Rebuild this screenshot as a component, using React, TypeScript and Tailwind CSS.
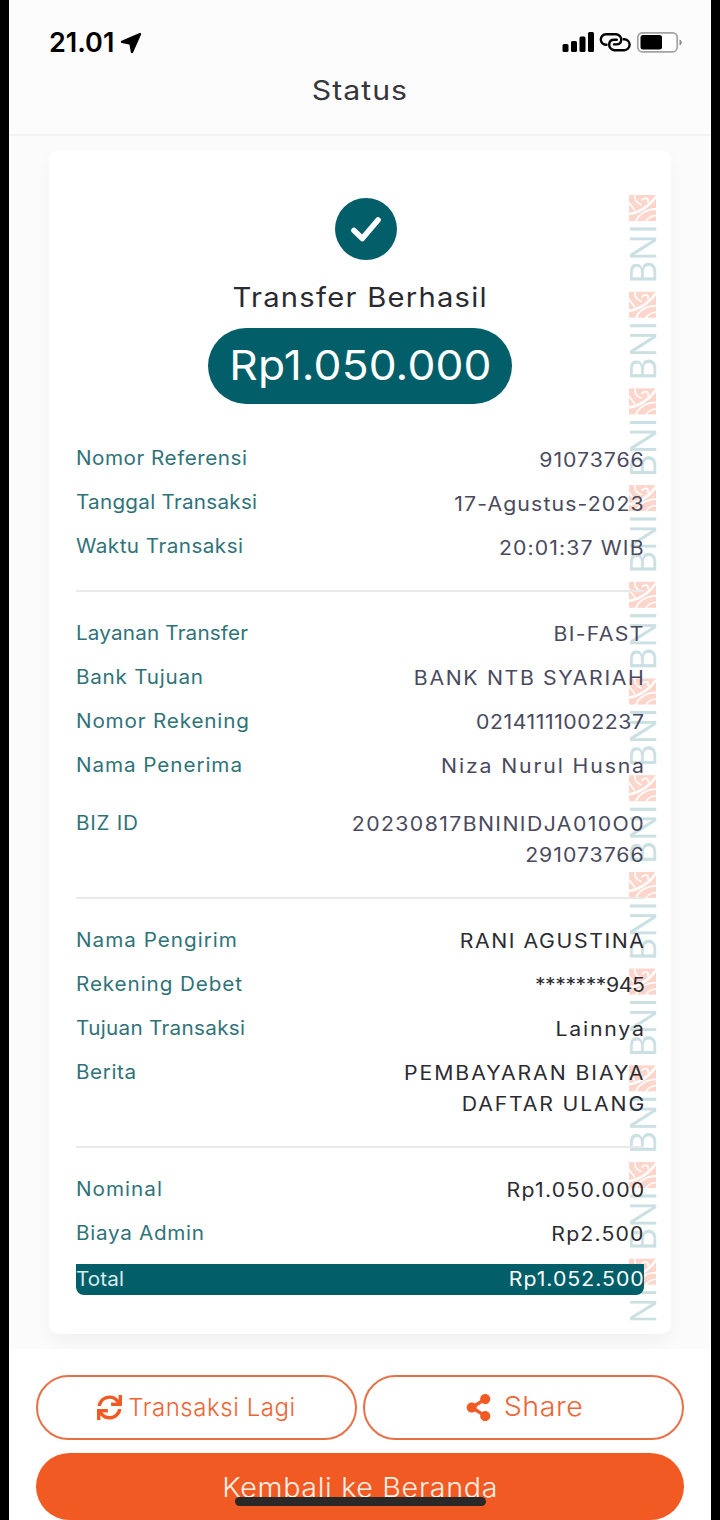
import { FaShareAlt, FaSync } from "react-icons/fa";

type Tone = "slate" | "ink";
type Line = { text: string; tracking: string };
type Detail = { label: Line; value: Line[]; tone: Tone; className?: string };

const sections: Detail[][] = [
  [
    { label: { text: "Nomor Referensi", tracking: "tracking-[0.48px]" }, value: [{ text: "91073766", tracking: "tracking-[0.88px] -mr-[0.88px]" }], tone: "slate" },
    { label: { text: "Tanggal Transaksi", tracking: "tracking-[0.24px]" }, value: [{ text: "17-Agustus-2023", tracking: "tracking-[1.04px] -mr-[1.04px]" }], tone: "slate" },
    { label: { text: "Waktu Transaksi", tracking: "tracking-[0.43px]" }, value: [{ text: "20:01:37 WIB", tracking: "tracking-[1.02px] -mr-[1.02px]" }], tone: "slate" },
  ],
  [
    { label: { text: "Layanan Transfer", tracking: "tracking-[0.16px]" }, value: [{ text: "BI-FAST", tracking: "tracking-[1.22px] -mr-[1.22px]" }], tone: "slate" },
    { label: { text: "Bank Tujuan", tracking: "tracking-[0.7px]" }, value: [{ text: "BANK NTB SYARIAH", tracking: "tracking-[1.5px] -mr-[1.5px]" }], tone: "slate" },
    { label: { text: "Nomor Rekening", tracking: "tracking-[0.78px]" }, value: [{ text: "02141111002237", tracking: "tracking-[0.5px] -mr-[0.5px]" }], tone: "slate" },
    { label: { text: "Nama Penerima", tracking: "tracking-[0.87px]" }, value: [{ text: "Niza Nurul Husna", tracking: "tracking-[1.7px] -mr-[1.7px]" }], tone: "slate" },
    {
      label: { text: "BIZ ID", tracking: "tracking-[0.69px]" },
      value: [
        { text: "20230817BNINIDJA010O0", tracking: "tracking-[1.28px] -mr-[1.28px]" },
        { text: "291073766", tracking: "tracking-[0.91px] -mr-[0.91px]" },
      ],
      tone: "slate",
      className: "mt-3.5",
    },
  ],
  [
    { label: { text: "Nama Pengirim", tracking: "tracking-[0.94px]" }, value: [{ text: "RANI AGUSTINA", tracking: "tracking-[1.45px] -mr-[1.45px]" }], tone: "ink" },
    { label: { text: "Rekening Debet", tracking: "tracking-[0.84px]" }, value: [{ text: "*******945", tracking: "tracking-[-0.46px]" }], tone: "ink" },
    { label: { text: "Tujuan Transaksi", tracking: "tracking-[0.29px]" }, value: [{ text: "Lainnya", tracking: "tracking-[1.63px] -mr-[1.63px]" }], tone: "ink" },
    {
      label: { text: "Berita", tracking: "tracking-[0.54px]" },
      value: [
        { text: "PEMBAYARAN BIAYA", tracking: "tracking-[1.75px] -mr-[1.75px]" },
        { text: "DAFTAR ULANG", tracking: "tracking-[1.67px] -mr-[1.67px]" },
      ],
      tone: "ink",
    },
  ],
  [
    { label: { text: "Nominal", tracking: "tracking-[0.95px]" }, value: [{ text: "Rp1.050.000", tracking: "tracking-[1.15px] -mr-[1.15px]" }], tone: "ink" },
    { label: { text: "Biaya Admin", tracking: "tracking-[0.66px]" }, value: [{ text: "Rp2.500", tracking: "tracking-[1.07px] -mr-[1.07px]" }], tone: "ink" },
  ],
];

const marks = [0, 1, 2, 3, 4, 5, 6, 7, 8, 9, 10, 11];

function StatusIcons() {
  return (
    <svg width="122" height="24" viewBox="0 0 122 24" fill="none">
      <rect x="2.5" y="14" width="6" height="8" rx="1.5" fill="#000" />
      <rect x="11" y="11" width="6" height="11" rx="1.5" fill="#000" />
      <rect x="19.5" y="6.5" width="6" height="15.5" rx="1.5" fill="#000" />
      <rect x="28" y="2" width="6" height="20" rx="1.5" fill="#000" />
      <g stroke="#000" strokeWidth="2.4" strokeLinecap="round">
        <path d="M46.5 14.8h-.3a5.2 5.2 0 0 1-.2-10.6h10.2a5.4 5.4 0 0 1 5 6.2c-.3 2.6-2.3 4-4.8 4H54" />
        <path d="M63.7 9.2h.3a5.5 5.5 0 0 1 .2 11H54.5a5.6 5.6 0 0 1-5.3-6.2c.3-2.7 2.3-4.3 4.9-4.3h2.7" />
      </g>
      <rect x="77.8" y="2.8" width="39.4" height="19" rx="4.5" fill="#fff" stroke="#a3a3a3" strokeWidth="1.7" />
      <rect x="80.5" y="5" width="21.5" height="14.5" rx="2.5" fill="#000" />
      <path d="M119.5 9.5c3 .8 3 5 0 5.8z" fill="#8b8b8b" />
    </svg>
  );
}

function Watermark() {
  return (
    <svg className="absolute right-[15px] top-[45px] overflow-visible" width="27" height="1127" viewBox="0 0 27 1127">
      {marks.map((i) => (
        <g key={i} transform={`translate(0 ${i * 96.7})`}>
          <rect x="0" y="0" width="27" height="26" fill="#fdd5ca" />
          <g fill="none" stroke="#fff" strokeLinecap="round">
            <path d="M-.5 19C10 18 20 11 27.5 1" strokeWidth="2.6" />
            <path d="M7 26.5C9 19 18 14 27.5 14" strokeWidth="1.8" />
            <path d="M-.5 7l6 8M6 -.5c-1 5 1 8 6 10M13 5c3-3 7-2 6 2" strokeWidth="1.6" />
            <path d="M17 26.5c1-3 5-6 10.5-6" strokeWidth="1.5" />
          </g>
          <text
            transform={i === 11 ? "translate(26.5 65) rotate(-90)" : "translate(26.5 89) rotate(-90)"}
            textLength={i === 11 ? 36 : 60}
            lengthAdjust="spacingAndGlyphs"
            className="fill-[#cbe0e2] font-['Open_Sans',sans-serif] text-[36px] font-medium"
          >
            {i === 11 ? "NI" : "BNI"}
          </text>
        </g>
      ))}
    </svg>
  );
}

function DetailRow({ label, value, tone, className = "" }: Detail) {
  return (
    <div className={`flex items-start justify-between ${className}`}>
      <span className={`-mt-[1.5px] origin-left scale-x-[1.06] leading-[30px] text-[#2f7379] ${label.tracking}`}>{label.text}</span>
      <div className="flex flex-col items-end">
        {value.map((line) => (
          <span
            key={line.text}
            className={`origin-right scale-x-[1.09] font-[425] leading-[30.5px] ${tone === "slate" ? "text-[#4a4a5e]" : "text-[#2b2b31]"} ${line.tracking}`}
          >
            {line.text}
          </span>
        ))}
      </div>
    </div>
  );
}

export default function App() {
  return (
    <div className="h-[1520px] w-[720px] overflow-hidden bg-black px-[9px] font-['Inter',sans-serif]">
      <div className="relative flex h-full flex-col bg-white">
        <header className="flex h-[136px] flex-col border-b-2 border-[#f3f3f3] bg-[#fcfcfc]">
          <div className="flex h-[60px] items-start justify-between pl-10 pr-[29px] pt-[30px]">
            <div className="flex items-center gap-1.5 pt-px">
              <span className="text-[27px] font-semibold leading-6 text-black">21.01</span>
              <svg width="22" height="22" viewBox="0 0 22 22">
                <path d="M20 2 2 9.8 10.5 11.5 12 20z" fill="#000" stroke="#000" strokeWidth="2.4" strokeLinejoin="round" />
              </svg>
            </div>
            <StatusIcons />
          </div>
          <h1 className="flex justify-center pt-[15px] text-[27px] leading-8 text-[#35353b]">
            <span className="scale-x-[1.12] tracking-[0.9px]">Status</span>
          </h1>
        </header>

        <main className="h-[1214px] bg-[#fbfbfb] px-10 pt-3.5">
          <section className="relative flex h-[1184px] flex-col rounded-[10px] bg-white px-[27px] text-[19.5px] shadow-[0_8px_16px_rgba(0,0,0,0.04)]">
            <Watermark />
            <div className="relative flex flex-col items-center pt-12">
              <div className="ml-3 flex size-[62px] items-center justify-center rounded-full bg-[#025f69]">
                <svg width="34" height="30" viewBox="0 0 34 30" fill="none">
                  <path d="M5 16.5 13.3 24.5 29 6" stroke="#fff" strokeWidth="5.6" strokeLinecap="round" strokeLinejoin="round" />
                </svg>
              </div>
              <h2 className="mt-5 scale-x-[1.08] text-[27px] leading-9 tracking-[1.17px] text-[#2a2a30]">Transfer Berhasil</h2>
              <div className="mt-3 flex h-[76px] w-[304px] items-center justify-center rounded-full bg-[#025f69] text-[41px] text-white">
                <span className="scale-x-[1.08] tracking-[0.12px]">Rp1.050.000</span>
              </div>
            </div>

            <div className="relative mt-[41px] flex flex-col">
              {sections.map((rows, i) => (
                <div key={i} className={i === 0 ? "" : "mt-[27px] border-t-2 border-[#e9e9eb] pt-[27px]"}>
                  <div className="flex flex-col gap-[13.5px]">
                    {rows.map((row) => (
                      <DetailRow key={row.label.text} {...row} />
                    ))}
                  </div>
                </div>
              ))}
              <div className="mt-3.5 flex h-[31px] items-center justify-between rounded-b-lg bg-[#025f69] text-white">
                <span className="origin-left scale-x-[1.06] tracking-[0.1px] text-[#d9ecee]">Total</span>
                <span className="-mr-[0.91px] origin-right scale-x-[1.09] font-[425] tracking-[0.91px]">Rp1.052.500</span>
              </div>
            </div>
          </section>
        </main>

        <footer className="flex flex-col px-[27px] pt-[26px]">
          <div className="flex gap-1.5 font-light text-[#ee6535]">
            <button className="flex h-[65px] flex-1 items-center justify-center gap-1.5 rounded-full border-2 border-[#e87047] text-[24px] tracking-[0.55px]">
              <FaSync className="size-[25px] text-[#f15a23]" />
              Transaksi Lagi
            </button>
            <button className="flex h-[65px] flex-1 items-center justify-center gap-3.5 rounded-full border-2 border-[#e87047] text-[27px]">
              <FaShareAlt className="size-[27px] text-[#f15a23]" />
              <span className="scale-x-[1.06] tracking-[0.47px]">Share</span>
            </button>
          </div>
          <button className="mt-[13px] flex h-[67px] items-center justify-center rounded-full bg-[#f15a23] pt-1 text-[27px] font-light text-[#fff1e8]">
            <span className="scale-x-[1.06] tracking-[0.64px]">Kembali ke Beranda</span>
          </button>
        </footer>
        <div className="absolute bottom-[14px] left-[226px] h-[9px] w-[251px] rounded-full bg-[#2b2828]" />
      </div>
    </div>
  );
}
